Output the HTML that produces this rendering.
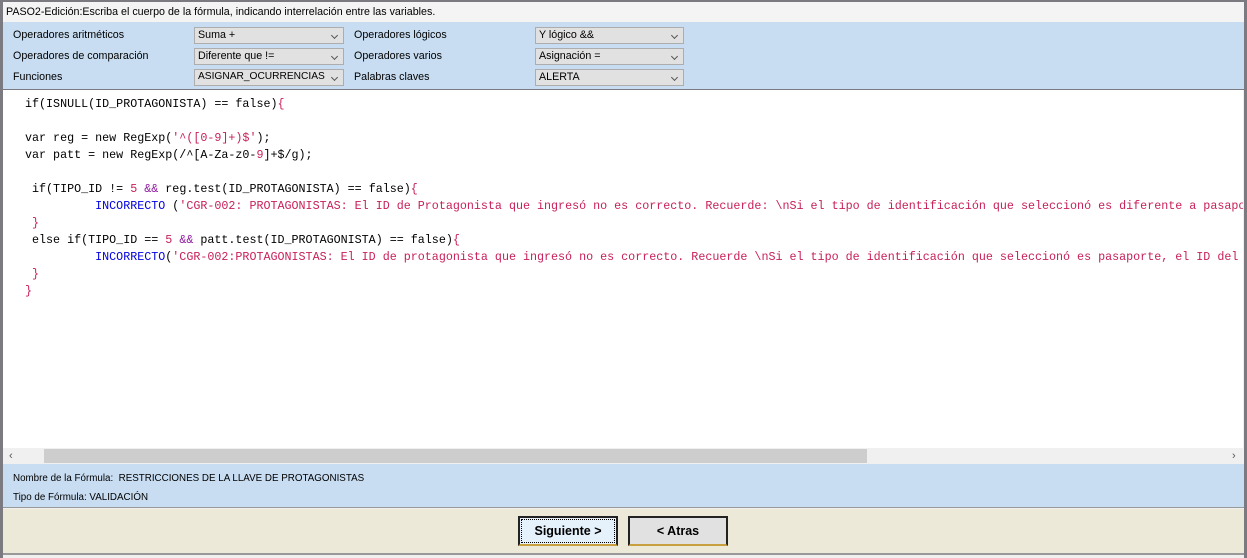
<!DOCTYPE html>
<html><head><meta charset="utf-8"><style>
*{margin:0;padding:0;box-sizing:border-box}
body{width:1247px;height:558px;overflow:hidden;background:#f0f0f0;font-family:"Liberation Sans",sans-serif;font-size:10.7px;color:#000;position:relative}
.a{position:absolute}
.frame{left:0;top:0;width:1247px;height:558px;border-top:2px solid #7a7a80;border-left:3px solid #7a7a80;border-right:3px solid #7a7a80}
.title{left:3px;top:2px;width:1241px;height:20px;background:#f4f4f4;padding:4px 0 0 3px}
.blue{left:3px;top:22px;width:1241px;height:68px;background:#c8ddf2;border-bottom:1px solid #7a7a80}
.cb{height:17px;background:#e1e1e1;border:1px solid #adadad;padding:1px 0 0 3px}
.cb::after{content:"";position:absolute;right:6px;top:5px;width:4px;height:4px;border-right:1px solid #555;border-bottom:1px solid #555;transform:rotate(45deg)}
.ed{left:3px;top:90px;width:1240px;height:358px;background:#fff;overflow:hidden}
pre{position:absolute;left:22px;top:6px;font-family:"Liberation Mono",monospace;font-size:11.7px;line-height:17px;color:#000;white-space:pre}
.s{color:#c8205a}.k{color:#0000e0}.p{color:#9020a0}
.sb{left:3px;top:448px;width:1240px;height:16px;background:#f0f0f0}
.th{left:44px;top:449px;width:823px;height:14px;background:#cdcdcd}
.info{left:3px;top:464px;width:1241px;height:44px;background:#c8ddf2;border-bottom:1px solid #999;font-size:9.8px}
.beige{left:3px;top:509px;width:1241px;height:46px;background:#ece9d8;border-bottom:2px solid #999}
.btn{height:30px;top:516px;background:#e1e1e1;font-weight:bold;font-size:12.5px;text-align:center;line-height:26px;border:2px solid #222;border-bottom-color:#c8a040}
</style></head><body>
<div class="a frame"></div>
<div class="a title">PASO2-Edición:Escriba el cuerpo de la fórmula, indicando interrelación entre las variables.</div>
<div class="a blue"></div>
<div class="a" style="left:13px;top:29px">Operadores aritméticos</div>
<div class="a" style="left:13px;top:50px">Operadores de comparación</div>
<div class="a" style="left:13px;top:71px">Funciones</div>
<div class="a cb" style="left:194px;top:27px;width:150px">Suma +</div>
<div class="a cb" style="left:194px;top:48px;width:150px">Diferente que !=</div>
<div class="a cb" style="left:194px;top:69px;width:150px;font-size:10.2px">ASIGNAR_OCURRENCIAS</div>
<div class="a" style="left:354px;top:29px">Operadores lógicos</div>
<div class="a" style="left:354px;top:50px">Operadores varios</div>
<div class="a" style="left:354px;top:71px">Palabras claves</div>
<div class="a cb" style="left:535px;top:27px;width:149px">Y lógico &amp;&amp;</div>
<div class="a cb" style="left:535px;top:48px;width:149px">Asignación =</div>
<div class="a cb" style="left:535px;top:69px;width:149px">ALERTA</div>
<div class="a ed"><pre>if(ISNULL(ID_PROTAGONISTA) == false)<span class="s">{</span>

var reg = new RegExp(<span class="s">'^([0-9]+)$'</span>);
var patt = new RegExp(/^[A-Za-z0-<span class="s">9</span>]+$/g);

 if(TIPO_ID != <span class="s">5</span> <span class="p">&amp;&amp;</span> reg.test(ID_PROTAGONISTA) == false)<span class="s">{</span>
          <span class="k">INCORRECTO</span> (<span class="s">'CGR-002: PROTAGONISTAS: El ID de Protagonista que ingresó no es correcto. Recuerde: \nSi el tipo de identificación que seleccionó es diferente a pasaporte</span>
 <span class="s">}</span>
 else if(TIPO_ID == <span class="s">5</span> <span class="p">&amp;&amp;</span> patt.test(ID_PROTAGONISTA) == false)<span class="s">{</span>
          <span class="k">INCORRECTO</span>(<span class="s">'CGR-002:PROTAGONISTAS: El ID de protagonista que ingresó no es correcto. Recuerde \nSi el tipo de identificación que seleccionó es pasaporte, el ID del</span>
 <span class="s">}</span>
<span class="s">}</span></pre></div>
<div class="a sb"></div>
<div class="a th"></div>
<div class="a" style="left:9px;top:450px;font-size:11px;color:#555">‹</div>
<div class="a" style="left:1232px;top:450px;font-size:11px;color:#555">›</div>
<div class="a info"></div>
<div class="a" style="left:13px;top:473px;font-size:9.8px">Nombre de la Fórmula:&nbsp; RESTRICCIONES DE LA LLAVE DE PROTAGONISTAS</div>
<div class="a" style="left:13px;top:492px;font-size:9.8px">Tipo de Fórmula: VALIDACIÓN</div>
<div class="a beige"></div>
<div class="a btn" style="left:518px;width:100px;background:#e5f1fb;outline:1px dotted #000;outline-offset:-4px">Siguiente &gt;</div>
<div class="a btn" style="left:628px;width:100px">&lt; Atras</div>
</body></html>
